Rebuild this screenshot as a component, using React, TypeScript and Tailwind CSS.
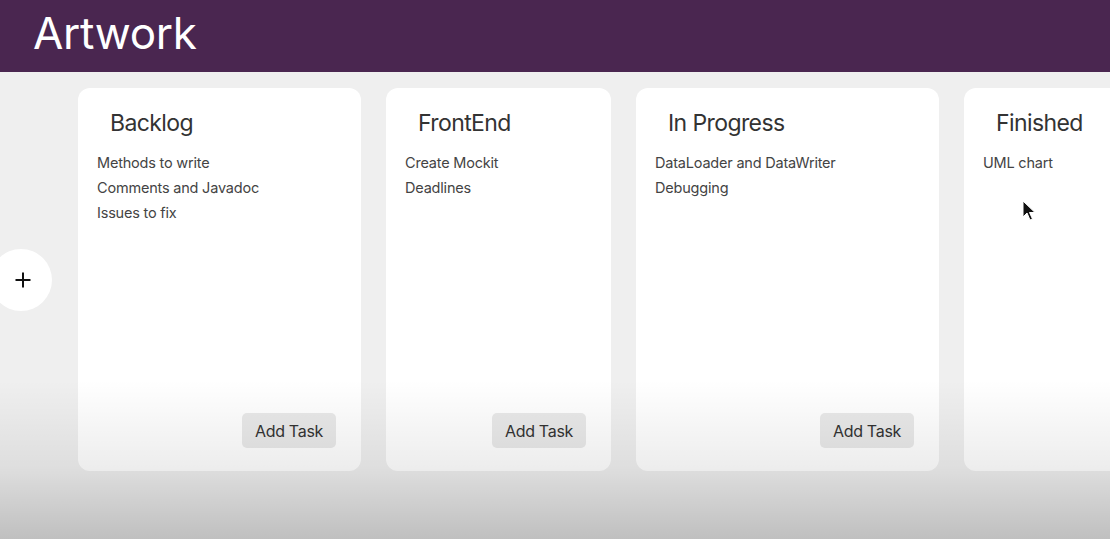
import React from "react";

type Col = { title: string; items: string[]; width: string };

const cols: Col[] = [
  { title: "Backlog", items: ["Methods to write", "Comments and Javadoc", "Issues to fix"], width: "w-[283px]" },
  { title: "FrontEnd", items: ["Create Mockit", "Deadlines"], width: "w-[225px]" },
  { title: "In Progress", items: ["DataLoader and DataWriter", "Debugging"], width: "w-[303px]" },
  { title: "Finished", items: ["UML chart"], width: "w-[283px]" },
];

function Card({ c }: { c: Col }) {
  return (
    <div className={`${c.width} shrink-0 h-[383px] bg-white rounded-[12px] flex flex-col pt-[20px] pb-[23px] pl-[19px] pr-[25px]`}>
      <div className="pl-[13px] text-[23px] leading-[30px] tracking-[-0.6px] text-[#333333]">{c.title}</div>
      <div className="mt-[12px] flex flex-col">
        {c.items.map((t) => (
          <div key={t} className="text-[14.5px] leading-[25px] tracking-[-0.2px] text-[#444444]">
            {t}
          </div>
        ))}
      </div>
      <div className="mt-auto flex justify-end">
        <button className="h-[35px] w-[94px] rounded-[5px] bg-[#e9e9e9] text-[16px] tracking-[-0.3px] text-[#333333]">Add Task</button>
      </div>
    </div>
  );
}

export default function App() {
  return (
    <div className="relative w-[1110px] h-[539px] overflow-hidden bg-[#efefef] font-['Inter','Liberation_Sans',sans-serif]">
      <div className="h-[72px] bg-[#4a2650] flex items-center pl-[33px] pb-[6px]">
        <h1 className="text-[44px] leading-none text-white tracking-[-0.3px]">Artwork</h1>
      </div>
      <div className="flex pt-[16px] gap-[25px]">
        <div className="w-[53px] shrink-0 -mr-[25px] flex items-center">
          <div className="w-[62px] h-[62px] -ml-[10px] rounded-full bg-white flex items-center justify-center">
            <svg width="18" height="18" viewBox="0 0 18 18" className="ml-[3px]">
              <path d="M9 1.5V16.5M1.5 9H16.5" stroke="#111" strokeWidth="2" />
            </svg>
          </div>
        </div>
        <div className="w-[25px] shrink-0 -ml-[25px]" />
        {cols.map((c) => (
          <Card key={c.title} c={c} />
        ))}
      </div>
      <div className="pointer-events-none absolute inset-x-0 top-[380px] bottom-0 bg-[linear-gradient(to_bottom,rgba(0,0,0,0)_0%,rgba(0,0,0,0.07)_55%,rgba(0,0,0,0.2)_100%)]" />
      <svg className="absolute left-[1022px] top-[200px]" width="14" height="22" viewBox="0 0 14 22">
        <path d="M1 1L1 17L5 13L8 20L10.5 19L7.5 12.5L13 12.5Z" fill="#111" stroke="#fff" strokeWidth="1" />
      </svg>
    </div>
  );
}
